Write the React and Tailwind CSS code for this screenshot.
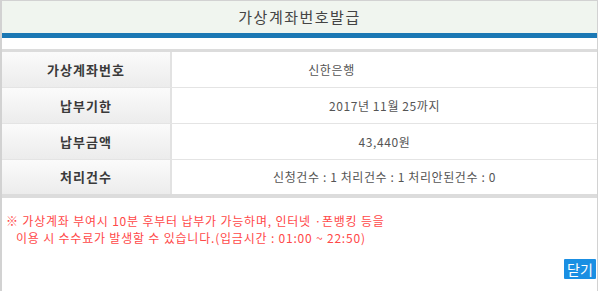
import React from "react";

const rows = [
  { label: "가상계좌번호", value: (<><span>신한은행</span><span className="inline-block w-[106px]"></span></>) },
  { label: "납부기한", value: "2017년 11월 25까지" },
  { label: "납부금액", value: "43,440원" },
  { label: "처리건수", value: "신청건수 : 1 처리건수 : 1 처리안된건수 : 0" },
];

export default function App() {
  return (
    <div
      className="w-[598px] h-[291px] border-l-2 border-r border-t border-[#d2d2d2] bg-white flex flex-col"
      style={{ fontFamily: '"Noto Sans CJK KR", "Noto Sans", sans-serif' }}
    >
      <div className="h-[32px] bg-[#f0f5ef] flex items-center justify-center text-[15px] text-[#444] tracking-[1.5px]">
        가상계좌번호발급
      </div>
      <div className="h-[5px] bg-[#1b78b4]"></div>
      <div className="h-[11px]"></div>
      <div className="border-t-[3px] border-b-4 border-[#dcdcdc]">
        {rows.map((r, i) => (
          <div
            key={i}
            className={`grid grid-cols-[168px_2px_1fr] ${i < 3 ? "h-[36px] border-b border-[#e4e4e4]" : "h-[34px]"}`}
          >
            <div className="bg-gradient-to-b from-[#fbfbfb] to-[#ececec] flex items-center justify-center text-[13px] font-bold text-[#3a3a3a] tracking-[1px]">
              {r.label}
            </div>
            <div className="bg-[#e2e2e2]"></div>
            <div className="flex items-center justify-center text-[12px] text-[#555] tracking-[0.6px] whitespace-pre">
              {r.value}
            </div>
          </div>
        ))}
      </div>
      <div className="pt-[14px] pl-[4px] text-[12px] leading-[17px] text-[#ff4848] tracking-[0.8px]">
        <div>※ 가상계좌 부여시 10분 후부터 납부가 가능하며, 인터넷 ·폰뱅킹 등을</div>
        <div className="pl-[10px]">이용 시 수수료가 발생할 수 있습니다.(입금시간 : 01:00 ~ 22:50)</div>
      </div>
      <div className="flex justify-end mt-[13px] pr-[1px]">
        <button className="w-[32px] h-[20px] bg-[#1a8fe3] text-white text-[14px] leading-[20px] flex items-center justify-center rounded-[1px]">
          닫기
        </button>
      </div>
    </div>
  );
}
